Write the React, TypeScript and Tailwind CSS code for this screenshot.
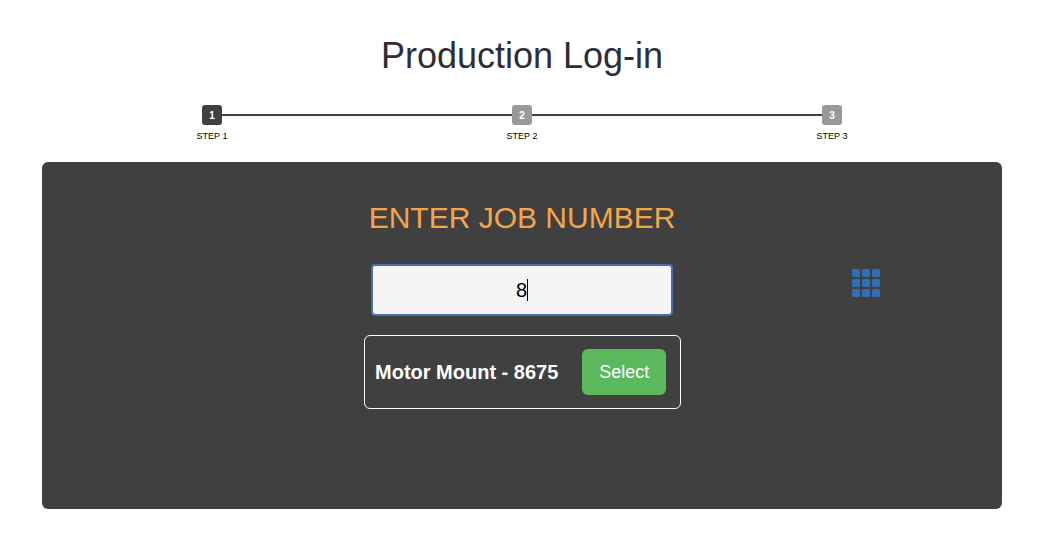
const font = { fontFamily: '"Liberation Sans", Arial, sans-serif' }

function Step({ num, active }: { num: number; active?: boolean }) {
  return (
    <div className="w-10 flex flex-col items-center">
      <div
        className={
          'w-5 h-5 rounded-[3px] flex items-center justify-center text-white text-[10px] font-bold ' +
          (active ? 'bg-[#404040]' : 'bg-[#999999]')
        }
      >
        {num}
      </div>
      <div className="mt-[6px] text-[9px] leading-[10px] text-black whitespace-nowrap">STEP {num}</div>
    </div>
  )
}

function Line() {
  return <div className="flex-1 h-[2px] mt-[9px] -mx-[10px] bg-[#404040]" />
}

function GridIcon() {
  return (
    <svg width="28" height="28" viewBox="0 0 28 28" className="fill-[#2e6fb7]">
      {[0, 10, 20].map((y) =>
        [0, 10, 20].map((x) => <rect key={x + '-' + y} x={x} y={y} width="8" height="8" rx="1.5" />),
      )}
    </svg>
  )
}

export default function App() {
  return (
    <div className="bg-white h-[554px] pl-[42px]" style={font}>
      <div className="w-[960px]">
        <h1 className="pt-[35px] text-center text-[36px] leading-[41px] font-normal text-[#2f2d38]">
          Production Log-in
        </h1>

        <div className="mt-[29px] w-[660px] mx-auto flex items-start">
          <Step num={1} active />
          <Line />
          <Step num={2} />
          <Line />
          <Step num={3} />
        </div>

        <div className="mt-[21px] h-[347px] rounded-[6px] bg-[#404040] pt-[39px]">
          <h2 className="text-center text-[30px] leading-[34px] font-normal text-[#f5a54a]">ENTER JOB NUMBER</h2>

          <div className="mt-[29px] flex items-start">
            <div className="ml-[329px] w-[302px] h-[52px] rounded-[4px] border-2 border-[#4a6ea9] bg-[#f5f5f5] flex items-center justify-center text-[20px] text-black">
              <span>8</span>
              <span className="w-px h-[22px] bg-black" />
            </div>
            <div className="ml-[179px] mt-[5px]">
              <GridIcon />
            </div>
          </div>

          <div className="mt-[19px] ml-[322px] w-[317px] h-[74px] rounded-[6px] border border-white flex items-center">
            <div className="ml-[10px] text-[20px] font-bold text-white whitespace-nowrap">Motor Mount - 8675</div>
            <button className="ml-[24px] w-[84px] h-[46px] rounded-[6px] bg-[#5cb85c] text-white text-[18px]">
              Select
            </button>
          </div>
        </div>
      </div>
    </div>
  )
}
